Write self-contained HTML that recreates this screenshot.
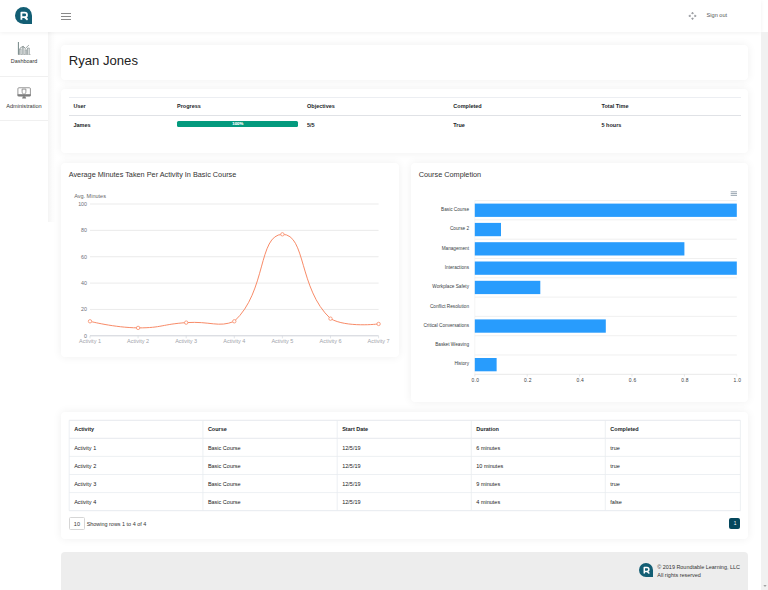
<!DOCTYPE html>
<html><head><meta charset="utf-8">
<style>
*{box-sizing:border-box;margin:0;padding:0}
html,body{width:768px;height:590px;overflow:hidden;background:#fff;font-family:"Liberation Sans",sans-serif;color:#212529}
.a{position:absolute}
.t{position:absolute;white-space:nowrap;line-height:10px;height:10px}
.card{position:absolute;background:#fff;border-radius:4px;box-shadow:0 0 10px rgba(0,0,0,0.065)}
.hdr{left:0;top:0;width:761px;height:32px;background:#fff;box-shadow:0 1px 4px rgba(0,0,0,0.06);z-index:3}
.sb{left:761px;top:32px;width:7px;height:558px;background:#f1f1f1;z-index:4}
.side{left:0;top:32px;width:48px;height:190px;background:#fff;z-index:2}
.sdw{left:48px;top:32px;width:8px;height:190px;background:linear-gradient(to right,rgba(0,0,0,0.045),rgba(0,0,0,0.015) 50%,rgba(0,0,0,0));z-index:1}
.b{font-weight:bold}
</style></head><body>

<!-- header -->
<div class="a hdr">
  <svg class="a" style="left:15px;top:6.9px" width="17" height="17" viewBox="0 0 17 17">
    <path d="M8.5 0 A8.5 8.5 0 0 1 17 8.5 V17 H8.5 A8.5 8.5 0 0 1 8.5 0 Z" fill="#135e74"/>
    <path d="M6.4 12.7 V5.6 H9.7 A2.3 2.3 0 0 1 9.7 10.2 H6.4 M9.5 10 L12.6 12.7" stroke="#fff" stroke-width="1.8" fill="none" stroke-linejoin="round"/>
  </svg>
  <div class="a" style="left:61px;top:13px;width:10px;height:1px;background:#8a8a8a"></div>
  <div class="a" style="left:61px;top:16px;width:10px;height:1px;background:#8a8a8a"></div>
  <div class="a" style="left:61px;top:19px;width:10px;height:1px;background:#8a8a8a"></div>
  <svg class="a" style="left:688px;top:11px" width="9" height="10" viewBox="0 0 9 10">
    <g fill="#8e9196" stroke="#8e9196" stroke-width="0.5">
    <path d="M4.5 1 L3.5 2.5 L5.5 2.5 Z M4.5 8.8 L3.5 7.3 L5.5 7.3 Z M0.7 4.9 L2.2 3.9 L2.2 5.9 Z M8.3 4.9 L6.8 3.9 L6.8 5.9 Z"/>
    <path d="M4.5 2.4 V3.3 M4.5 6.5 V7.4 M2.1 4.9 H2.9 M6.1 4.9 H6.9" fill="none"/>
    </g>
  </svg>
  <div class="t" style="left:706.6px;top:10.2px;font-size:5.6px;color:#555">Sign out</div>
</div>

<div class="a sb"><svg class="a" style="left:1.5px;top:551.5px" width="4" height="4" viewBox="0 0 4 4"><path d="M0.3 1 L3.7 1 L2 3 Z" fill="#a3a3a3"/></svg></div>

<!-- sidebar -->
<div class="a sdw"></div>
<div class="a side">
  <div class="a" style="left:0;top:44px;width:48px;height:1px;background:#f0f0f0"></div>
  <div class="a" style="left:0;top:88px;width:48px;height:1px;background:#f0f0f0"></div>
</div>
<svg class="a" style="left:14px;top:39px;z-index:5" width="20" height="18" viewBox="0 0 20 18">
  <path d="M4.4 3 V15.6" stroke="#587070" stroke-width="0.85"/>
  <path d="M4 15.5 H16.5" stroke="#8a9090" stroke-width="0.6"/>
  <path d="M5.5 15.4 V9.9 H7 V15.4 M8.3 15.4 V8.1 H9.9 V15.4 M11.2 15.4 V10.8 H12.6 V15.4 M13.5 15.4 V9 H15.3 V15.4" stroke="#6f7c7c" stroke-width="0.55" fill="#e4e7e7"/>
  <path d="M5.8 9.3 L9.1 7.1 L11.4 9.4 L14.9 6.1" stroke="#5f6b6b" stroke-width="0.6" fill="none"/>
</svg>
<div class="t" style="left:0;top:56px;width:48px;text-align:center;font-size:5.4px;color:#333;z-index:5">Dashboard</div>
<svg class="a" style="left:14px;top:84px;z-index:5" width="20" height="18" viewBox="0 0 20 18">
  <rect x="3.9" y="3.75" width="12.5" height="8.3" rx="1" stroke="#7d7d7d" stroke-width="0.8" fill="none"/>
  <path d="M3.6 11.2 H16.7" stroke="#7d7d7d" stroke-width="2"/>
  <path d="M8.1 5.1 H11.9 V7.4 C11.9 9.3 11.1 10.1 10 10.2 C8.9 10.1 8.1 9.3 8.1 7.4 Z" stroke="#7d7d7d" stroke-width="0.8" fill="none"/>
  <path d="M9 12.3 L8 14.6 H12.2 L11.2 12.3 Z" fill="#7d7d7d"/>
</svg>
<div class="t" style="left:0;top:100.75px;width:48px;text-align:center;font-size:5.6px;color:#333;z-index:5">Administration</div>

<!-- card 1 -->
<div class="card" style="left:61px;top:45px;width:687px;height:34.5px"></div>
<div class="t" style="left:68.8px;top:55.9px;font-size:13.1px;color:#222">Ryan Jones</div>

<!-- card 2: user summary -->
<div class="card" style="left:61px;top:89.4px;width:687px;height:63.6px"></div>
<div class="a" style="left:68.7px;top:97px;width:672px;height:0.8px;background:#eceef2"></div>
<div class="a" style="left:68.7px;top:115px;width:672px;height:1px;background:#e0e2e6"></div>
<div class="t b" style="left:73.5px;top:101.2px;font-size:5.5px">User</div>
<div class="t b" style="left:177px;top:101.2px;font-size:5.5px">Progress</div>
<div class="t b" style="left:307px;top:101.2px;font-size:5.5px">Objectives</div>
<div class="t b" style="left:453.3px;top:101.2px;font-size:5.5px">Completed</div>
<div class="t b" style="left:601.5px;top:101.2px;font-size:5.5px">Total Time</div>
<div class="t b" style="left:73.5px;top:119.5px;font-size:5.5px">James</div>
<div class="a" style="left:177px;top:120.8px;width:121px;height:6.2px;background:#049a7e;border-radius:1.5px"></div>
<div class="t b" style="left:177.3px;top:119.1px;width:121px;text-align:center;font-size:4.3px;color:#fff;-webkit-text-stroke:0.1px #fff">100%</div>
<div class="t b" style="left:307px;top:119.5px;font-size:5.5px">5/5</div>
<div class="t b" style="left:453.3px;top:119.5px;font-size:5.5px">True</div>
<div class="t b" style="left:601.5px;top:119.5px;font-size:5.5px">5 hours</div>

<!-- card 3: line chart -->
<div class="card" style="left:61px;top:163px;width:338.2px;height:193.8px"></div>
<div class="t" style="left:68.7px;top:170px;font-size:7.3px;color:#333">Average Minutes Taken Per Activity In Basic Course</div>
<div class="t" style="left:74.2px;top:190.6px;font-size:5.5px;color:#666">Avg. Minutes</div>

<!-- card 4: bar chart -->
<div class="card" style="left:411px;top:163px;width:337px;height:239px"></div>
<div class="t" style="left:418.7px;top:170px;font-size:7.3px;color:#333">Course Completion</div>

<!-- card 5: activity table -->
<div class="card" style="left:61px;top:412.3px;width:687px;height:126.7px"></div>
<div class="a" style="left:68.9px;top:517.4px;width:16px;height:13.1px;border:0.6px solid #d6d6d6;border-radius:1.5px"></div>
<div class="t" style="left:68.9px;top:519.1px;width:16px;text-align:center;font-size:5.5px;color:#333">10</div>
<div class="t" style="left:86.7px;top:519px;font-size:5.45px;color:#333">Showing rows 1 to 4 of 4</div>
<div class="a" style="left:729.1px;top:517.9px;width:11.2px;height:11.6px;background:#04475d;border-radius:2px"></div>
<div class="t" style="left:729.4px;top:518.8px;width:11.2px;text-align:center;font-size:4.8px;color:#fff">1</div>

<!-- GEN START -->
<svg class="a" style="left:0;top:0;z-index:1" width="768" height="590" viewBox="0 0 768 590">
<path d="M90 204.00 H378.6" stroke="#e6e6e6" stroke-width="0.8"/>
<path d="M90 230.36 H378.6" stroke="#e6e6e6" stroke-width="0.8"/>
<path d="M90 256.72 H378.6" stroke="#e6e6e6" stroke-width="0.8"/>
<path d="M90 283.08 H378.6" stroke="#e6e6e6" stroke-width="0.8"/>
<path d="M90 309.44 H378.6" stroke="#e6e6e6" stroke-width="0.8"/>
<path d="M90 335.80 H378.6" stroke="#cdd1d8" stroke-width="1"/>
<path d="M90.00 335.80 V338.30" stroke="#cfd3da" stroke-width="0.6"/>
<path d="M138.10 335.80 V338.30" stroke="#cfd3da" stroke-width="0.6"/>
<path d="M186.20 335.80 V338.30" stroke="#cfd3da" stroke-width="0.6"/>
<path d="M234.30 335.80 V338.30" stroke="#cfd3da" stroke-width="0.6"/>
<path d="M282.40 335.80 V338.30" stroke="#cfd3da" stroke-width="0.6"/>
<path d="M330.50 335.80 V338.30" stroke="#cfd3da" stroke-width="0.6"/>
<path d="M378.60 335.80 V338.30" stroke="#cfd3da" stroke-width="0.6"/>
<path d="M90.00,321.30 C90.00,321.30 114.01,327.56 138.10,327.89 C162.11,327.89 162.08,324.27 186.20,322.62 C210.18,320.98 218.61,327.89 234.30,321.30 C266.71,291.55 258.07,234.98 282.40,234.31 C306.17,234.31 298.40,288.76 330.50,318.67 C346.50,327.89 378.60,323.94 378.60,323.94" stroke="#f88b68" stroke-width="1" fill="none"/>
<circle cx="90.00" cy="321.30" r="1.7" fill="#fff" stroke="#f88b68" stroke-width="0.8"/>
<circle cx="138.10" cy="327.89" r="1.7" fill="#fff" stroke="#f88b68" stroke-width="0.8"/>
<circle cx="186.20" cy="322.62" r="1.7" fill="#fff" stroke="#f88b68" stroke-width="0.8"/>
<circle cx="234.30" cy="321.30" r="1.7" fill="#fff" stroke="#f88b68" stroke-width="0.8"/>
<circle cx="282.40" cy="234.31" r="1.7" fill="#fff" stroke="#f88b68" stroke-width="0.8"/>
<circle cx="330.50" cy="318.67" r="1.7" fill="#fff" stroke="#f88b68" stroke-width="0.8"/>
<circle cx="378.60" cy="323.94" r="1.7" fill="#fff" stroke="#f88b68" stroke-width="0.8"/>
</svg>
<div class="t" style="left:50px;top:199.00px;width:37px;text-align:right;font-size:5.3px;color:#6e7079;z-index:2">100</div>
<div class="t" style="left:50px;top:225.36px;width:37px;text-align:right;font-size:5.3px;color:#6e7079;z-index:2">80</div>
<div class="t" style="left:50px;top:251.72px;width:37px;text-align:right;font-size:5.3px;color:#6e7079;z-index:2">60</div>
<div class="t" style="left:50px;top:278.08px;width:37px;text-align:right;font-size:5.3px;color:#6e7079;z-index:2">40</div>
<div class="t" style="left:50px;top:304.44px;width:37px;text-align:right;font-size:5.3px;color:#6e7079;z-index:2">20</div>
<div class="t" style="left:50px;top:330.80px;width:37px;text-align:right;font-size:5.3px;color:#6e7079;z-index:2">0</div>
<div class="t" style="left:70.00px;top:336.1px;width:40px;text-align:center;font-size:5.5px;color:#a0a3aa;z-index:2">Activity 1</div>
<div class="t" style="left:118.10px;top:336.1px;width:40px;text-align:center;font-size:5.5px;color:#a0a3aa;z-index:2">Activity 2</div>
<div class="t" style="left:166.20px;top:336.1px;width:40px;text-align:center;font-size:5.5px;color:#a0a3aa;z-index:2">Activity 3</div>
<div class="t" style="left:214.30px;top:336.1px;width:40px;text-align:center;font-size:5.5px;color:#a0a3aa;z-index:2">Activity 4</div>
<div class="t" style="left:262.40px;top:336.1px;width:40px;text-align:center;font-size:5.5px;color:#a0a3aa;z-index:2">Activity 5</div>
<div class="t" style="left:310.50px;top:336.1px;width:40px;text-align:center;font-size:5.5px;color:#a0a3aa;z-index:2">Activity 6</div>
<div class="t" style="left:358.60px;top:336.1px;width:40px;text-align:center;font-size:5.5px;color:#a0a3aa;z-index:2">Activity 7</div>
<svg class="a" style="left:0;top:0;z-index:1" width="768" height="590" viewBox="0 0 768 590">
<path d="M474.8 200.60 H736.8" stroke="#e6e6e6" stroke-width="0.6"/>
<path d="M474.8 219.90 H736.8" stroke="#e6e6e6" stroke-width="0.6"/>
<path d="M474.8 239.20 H736.8" stroke="#e6e6e6" stroke-width="0.6"/>
<path d="M474.8 258.50 H736.8" stroke="#e6e6e6" stroke-width="0.6"/>
<path d="M474.8 277.80 H736.8" stroke="#e6e6e6" stroke-width="0.6"/>
<path d="M474.8 297.10 H736.8" stroke="#e6e6e6" stroke-width="0.6"/>
<path d="M474.8 316.40 H736.8" stroke="#e6e6e6" stroke-width="0.6"/>
<path d="M474.8 335.70 H736.8" stroke="#e6e6e6" stroke-width="0.6"/>
<path d="M474.8 355.00 H736.8" stroke="#e6e6e6" stroke-width="0.6"/>
<path d="M474.8 374.30 H736.8" stroke="#d8d8d8" stroke-width="0.6"/>
<path d="M474.8 200.60 V374.30" stroke="#ececec" stroke-width="0.6"/>
<path d="M474.80 374.30 V376.50" stroke="#d8d8d8" stroke-width="0.6"/>
<path d="M527.20 374.30 V376.50" stroke="#d8d8d8" stroke-width="0.6"/>
<path d="M579.60 374.30 V376.50" stroke="#d8d8d8" stroke-width="0.6"/>
<path d="M632.00 374.30 V376.50" stroke="#d8d8d8" stroke-width="0.6"/>
<path d="M684.40 374.30 V376.50" stroke="#d8d8d8" stroke-width="0.6"/>
<path d="M736.80 374.30 V376.50" stroke="#d8d8d8" stroke-width="0.6"/>
<rect x="474.8" y="203.60" width="262.00" height="13.3" fill="#289cfd"/>
<rect x="474.8" y="222.90" width="26.20" height="13.3" fill="#289cfd"/>
<rect x="474.8" y="242.20" width="209.60" height="13.3" fill="#289cfd"/>
<rect x="474.8" y="261.50" width="262.00" height="13.3" fill="#289cfd"/>
<rect x="474.8" y="280.80" width="65.50" height="13.3" fill="#289cfd"/>
<rect x="474.8" y="319.40" width="131.00" height="13.3" fill="#289cfd"/>
<rect x="474.8" y="358.00" width="21.83" height="13.3" fill="#289cfd"/>
<path d="M730.7 191.8 H737 M730.7 193.6 H737 M730.7 195.4 H737" stroke="#7a8a98" stroke-width="0.75"/>
</svg>
<div class="t" style="left:400px;top:205.05px;width:69px;text-align:right;font-size:4.7px;color:#373d3f;z-index:2">Basic Course</div>
<div class="t" style="left:400px;top:224.35px;width:69px;text-align:right;font-size:4.7px;color:#373d3f;z-index:2">Course 2</div>
<div class="t" style="left:400px;top:243.65px;width:69px;text-align:right;font-size:4.7px;color:#373d3f;z-index:2">Management</div>
<div class="t" style="left:400px;top:262.95px;width:69px;text-align:right;font-size:4.7px;color:#373d3f;z-index:2">Interactions</div>
<div class="t" style="left:400px;top:282.25px;width:69px;text-align:right;font-size:4.7px;color:#373d3f;z-index:2">Workplace Safety</div>
<div class="t" style="left:400px;top:301.55px;width:69px;text-align:right;font-size:4.7px;color:#373d3f;z-index:2">Conflict Resolution</div>
<div class="t" style="left:400px;top:320.85px;width:69px;text-align:right;font-size:4.7px;color:#373d3f;z-index:2">Critical Conversations</div>
<div class="t" style="left:400px;top:340.15px;width:69px;text-align:right;font-size:4.7px;color:#373d3f;z-index:2">Basket Weaving</div>
<div class="t" style="left:400px;top:359.45px;width:69px;text-align:right;font-size:4.7px;color:#373d3f;z-index:2">History</div>
<div class="t" style="left:465.45px;top:376.25px;width:20px;text-align:center;font-size:4.9px;letter-spacing:0.3px;color:#373d3f;z-index:2">0.0</div>
<div class="t" style="left:517.85px;top:376.25px;width:20px;text-align:center;font-size:4.9px;letter-spacing:0.3px;color:#373d3f;z-index:2">0.2</div>
<div class="t" style="left:570.25px;top:376.25px;width:20px;text-align:center;font-size:4.9px;letter-spacing:0.3px;color:#373d3f;z-index:2">0.4</div>
<div class="t" style="left:622.65px;top:376.25px;width:20px;text-align:center;font-size:4.9px;letter-spacing:0.3px;color:#373d3f;z-index:2">0.6</div>
<div class="t" style="left:675.05px;top:376.25px;width:20px;text-align:center;font-size:4.9px;letter-spacing:0.3px;color:#373d3f;z-index:2">0.8</div>
<div class="t" style="left:727.45px;top:376.25px;width:20px;text-align:center;font-size:4.9px;letter-spacing:0.3px;color:#373d3f;z-index:2">1.0</div>
<svg class="a" style="left:0;top:0;z-index:1" width="768" height="590" viewBox="0 0 768 590">
<path d="M69.2 420.3 H740.4" stroke="#dfe3ea" stroke-width="0.8"/>
<path d="M69.2 438.3 H740.4" stroke="#dfe3ea" stroke-width="0.8"/>
<path d="M69.2 456.4 H740.4" stroke="#e9ecf0" stroke-width="0.8"/>
<path d="M69.2 474.5 H740.4" stroke="#e9ecf0" stroke-width="0.8"/>
<path d="M69.2 492.6 H740.4" stroke="#e9ecf0" stroke-width="0.8"/>
<path d="M69.2 510.7 H740.4" stroke="#dfe3ea" stroke-width="0.8"/>
<path d="M69.2 420.3 V510.7" stroke="#e9ecf0" stroke-width="0.8"/>
<path d="M202.9 420.3 V510.7" stroke="#e9ecf0" stroke-width="0.8"/>
<path d="M337.2 420.3 V510.7" stroke="#e9ecf0" stroke-width="0.8"/>
<path d="M471.3 420.3 V510.7" stroke="#e9ecf0" stroke-width="0.8"/>
<path d="M605.3 420.3 V510.7" stroke="#e9ecf0" stroke-width="0.8"/>
<path d="M740.4 420.3 V510.7" stroke="#e9ecf0" stroke-width="0.8"/>
</svg>
<div class="t b" style="left:74.20px;top:423.90px;font-size:5.5px;z-index:2">Activity</div>
<div class="t b" style="left:207.90px;top:423.90px;font-size:5.5px;z-index:2">Course</div>
<div class="t b" style="left:342.20px;top:423.90px;font-size:5.5px;z-index:2">Start Date</div>
<div class="t b" style="left:476.30px;top:423.90px;font-size:5.5px;z-index:2">Duration</div>
<div class="t b" style="left:610.30px;top:423.90px;font-size:5.5px;z-index:2">Completed</div>
<div class="t" style="left:74.20px;top:442.55px;font-size:5.5px;color:#222;z-index:2">Activity 1</div>
<div class="t" style="left:207.90px;top:442.55px;font-size:5.5px;color:#222;z-index:2">Basic Course</div>
<div class="t" style="left:342.20px;top:442.55px;font-size:5.5px;color:#222;z-index:2">12/5/19</div>
<div class="t" style="left:476.30px;top:442.55px;font-size:5.5px;color:#222;z-index:2">6 minutes</div>
<div class="t" style="left:610.30px;top:442.55px;font-size:5.5px;color:#222;z-index:2">true</div>
<div class="t" style="left:74.20px;top:460.65px;font-size:5.5px;color:#222;z-index:2">Activity 2</div>
<div class="t" style="left:207.90px;top:460.65px;font-size:5.5px;color:#222;z-index:2">Basic Course</div>
<div class="t" style="left:342.20px;top:460.65px;font-size:5.5px;color:#222;z-index:2">12/5/19</div>
<div class="t" style="left:476.30px;top:460.65px;font-size:5.5px;color:#222;z-index:2">10 minutes</div>
<div class="t" style="left:610.30px;top:460.65px;font-size:5.5px;color:#222;z-index:2">true</div>
<div class="t" style="left:74.20px;top:478.75px;font-size:5.5px;color:#222;z-index:2">Activity 3</div>
<div class="t" style="left:207.90px;top:478.75px;font-size:5.5px;color:#222;z-index:2">Basic Course</div>
<div class="t" style="left:342.20px;top:478.75px;font-size:5.5px;color:#222;z-index:2">12/5/19</div>
<div class="t" style="left:476.30px;top:478.75px;font-size:5.5px;color:#222;z-index:2">9 minutes</div>
<div class="t" style="left:610.30px;top:478.75px;font-size:5.5px;color:#222;z-index:2">true</div>
<div class="t" style="left:74.20px;top:496.85px;font-size:5.5px;color:#222;z-index:2">Activity 4</div>
<div class="t" style="left:207.90px;top:496.85px;font-size:5.5px;color:#222;z-index:2">Basic Course</div>
<div class="t" style="left:342.20px;top:496.85px;font-size:5.5px;color:#222;z-index:2">12/5/19</div>
<div class="t" style="left:476.30px;top:496.85px;font-size:5.5px;color:#222;z-index:2">4 minutes</div>
<div class="t" style="left:610.30px;top:496.85px;font-size:5.5px;color:#222;z-index:2">false</div>
<!-- GEN END -->

<!-- footer -->
<div class="a" style="left:61px;top:551.6px;width:687.4px;height:50px;background:#ededed;border-radius:4px"></div>
<svg class="a" style="left:638.8px;top:563.3px" width="14" height="14" viewBox="0 0 17 17">
  <path d="M8.5 0 A8.5 8.5 0 0 1 17 8.5 V17 H8.5 A8.5 8.5 0 0 1 8.5 0 Z" fill="#135e74"/>
  <path d="M6.4 12.7 V5.6 H9.7 A2.3 2.3 0 0 1 9.7 10.2 H6.4 M9.5 10 L12.6 12.7" stroke="#fff" stroke-width="1.8" fill="none" stroke-linejoin="round"/>
</svg>
<div class="t" style="left:657.3px;top:561.5px;font-size:5.45px;color:#333">© 2019 Roundtable Learning, LLC</div>
<div class="t" style="left:657.3px;top:569.6px;font-size:5.45px;color:#333">All rights reserved</div>

</body></html>
